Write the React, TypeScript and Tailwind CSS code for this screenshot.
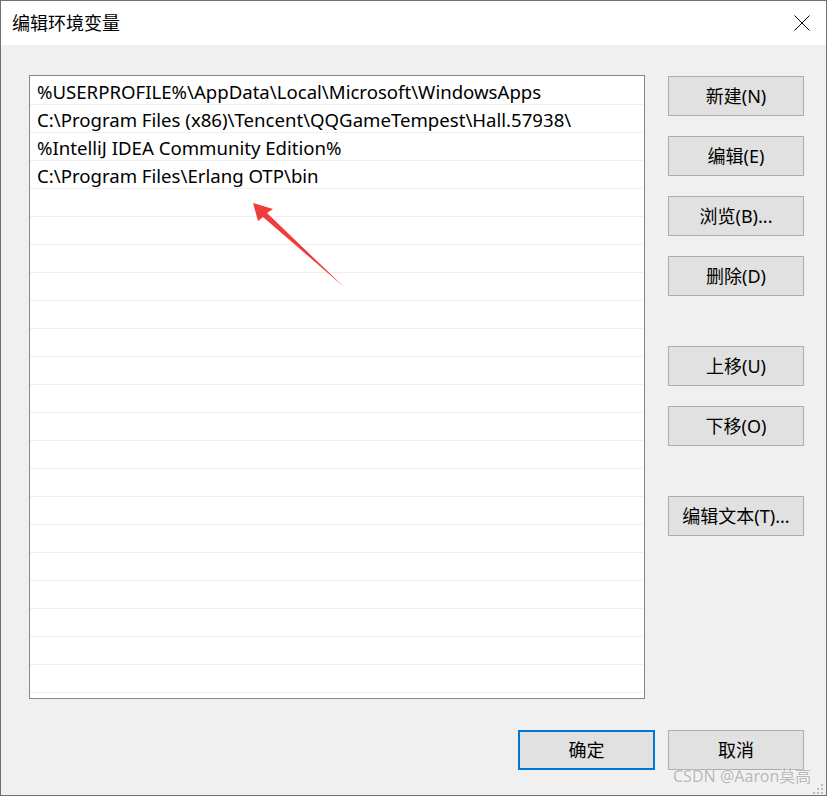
import React from "react";

const paths = [
  "%USERPROFILE%\\AppData\\Local\\Microsoft\\WindowsApps",
  "C:\\Program Files (x86)\\Tencent\\QQGameTempest\\Hall.57938\\",
  "%IntelliJ IDEA Community Edition%",
  "C:\\Program Files\\Erlang OTP\\bin",
];

const font = {
  fontFamily: '"Noto Sans", "Noto Sans CJK SC", sans-serif',
};

const SideButton = ({ label, className = "" }: { label: string; className?: string }) => (
  <button
    className={`h-[40px] w-[136px] border border-[#adadad] bg-[#e1e1e1] text-[18px] text-black ${className}`}
  >
    {label}
  </button>
);

export default function App() {
  const rows = Array.from({ length: 23 }, (_, i) => paths[i] ?? "");

  return (
    <div
      className="relative flex h-[796px] w-[827px] flex-col overflow-hidden border border-[#707070]"
      style={font}
    >
      {/* Title bar */}
      <div className="flex h-[44px] items-center justify-between bg-white pl-[11px] pr-[16px]">
        <span className="text-[18px] text-black">编辑环境变量</span>
        <svg width="16" height="16" viewBox="0 0 16 16">
          <path d="M0.5 0.5 L15.5 15.5 M15.5 0.5 L0.5 15.5" stroke="#000" strokeWidth="1" />
        </svg>
      </div>

      {/* Body */}
      <div className="flex flex-1 flex-col bg-[#f0f0f0] pl-[28px] pr-[21px] pt-[30px]">
        <div className="flex gap-[23px]">
          <div className="h-[624px] w-[616px] overflow-hidden border border-[#828790] bg-white pt-[1px]">
            {rows.map((p, i) => (
              <div
                key={i}
                className="flex h-[28px] items-center border-b border-[#efefef] pl-[7px] pt-[2px] text-[18.6px] text-black"
              >
                {p}
              </div>
            ))}
          </div>

          <div className="flex flex-col pt-[1px]">
            <SideButton label="新建(N)" />
            <SideButton label="编辑(E)" className="mt-[20px]" />
            <SideButton label="浏览(B)..." className="mt-[20px]" />
            <SideButton label="删除(D)" className="mt-[20px]" />
            <SideButton label="上移(U)" className="mt-[50px]" />
            <SideButton label="下移(O)" className="mt-[20px]" />
            <SideButton label="编辑文本(T)..." className="mt-[50px]" />
          </div>
        </div>

        <div className="mt-[31px] flex justify-end gap-[13px] pr-[1px]">
          <button className="h-[40px] w-[137px] border-2 border-[#0078d7] bg-[#e1e1e1] text-[18px] text-black">
            确定
          </button>
          <button className="h-[40px] w-[136px] border border-[#adadad] bg-[#e1e1e1] text-[18px] text-black">
            取消
          </button>
        </div>
      </div>

      {/* Red annotation arrow */}
      <svg className="pointer-events-none absolute left-0 top-0" width="827" height="796">
        <polygon
          points="252,202 272,208 266,212 343,286 262,216 257,220"
          fill="#f23b3b"
        />
      </svg>

      {/* Watermark */}
      <span className="pointer-events-none absolute left-[672px] top-[763px] text-[16px] text-[#b8b8b8] [text-shadow:0_0_2px_#ffffff]">
        CSDN @Aaron莫高
      </span>

      {/* Resize grip */}
      <svg className="absolute bottom-[1px] right-[3px]" width="10" height="10">
        {[
          [8, 0],
          [4, 4],
          [8, 4],
          [0, 8],
          [4, 8],
          [8, 8],
        ].map(([x, y], i) => (
          <rect key={i} x={x} y={y} width="2" height="2" fill="#bcbcbc" />
        ))}
      </svg>
    </div>
  );
}
